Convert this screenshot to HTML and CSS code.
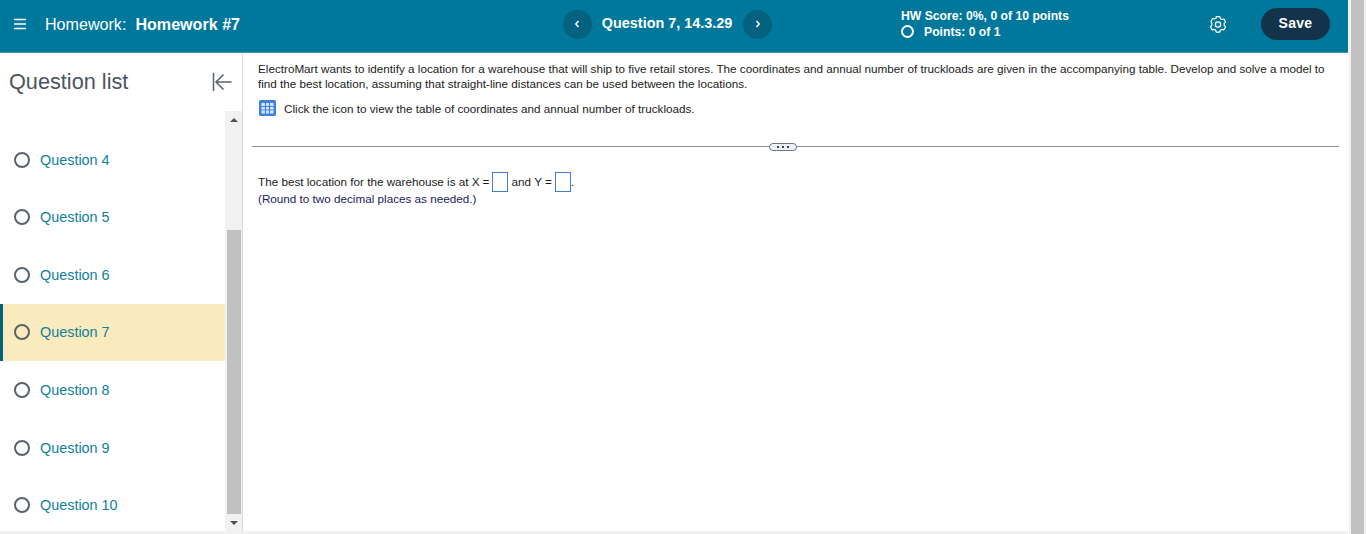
FILE: index.html
```html
<!DOCTYPE html>
<html lang="en">
<head>
<meta charset="utf-8">
<title>Homework #7</title>
<link rel="stylesheet" href="styles.css">
</head>
<body>
<div class="page">
  <div class="app">
    <header class="header">
      <div class="hd-left">
        <svg class="menu" width="14" height="12" viewBox="0 0 14 12"><path d="M1 1.500h12M1 6h12M1 10.500h12" stroke="#fff" stroke-width="1.500" fill="none"/></svg>
        <span class="hw-label">Homework:</span>
        <span class="hw-name">Homework #7</span>
      </div>
      <nav class="hd-nav">
        <button class="nav-btn"><svg width="6" height="8" viewBox="0 0 6 8"><path d="M4.500 1L1.800 4l2.700 3" stroke="#fff" stroke-width="1.500" fill="none"/></svg></button>
        <span class="nav-title">Question 7, 14.3.29</span>
        <button class="nav-btn"><svg width="6" height="8" viewBox="0 0 6 8"><path d="M1.500 1l2.700 3-2.700 3" stroke="#fff" stroke-width="1.500" fill="none"/></svg></button>
      </nav>
      <div class="score">
        <div class="score-line">HW Score: 0%, 0 of 10 points</div>
        <div class="score-line points"><span class="ring"></span>Points: 0 of 1</div>
      </div>
      <svg class="gear" width="16" height="17" viewBox="0 0 16 17"><path d="M6.200 1.200h3.600l.6 2 1.500.9 2-.5 1.700 3-1.400 1.500v1.800l1.400 1.500-1.700 3-2-.5-1.500.9-.6 2H6.200l-.6-2-1.500-.9-2 .5-1.700-3 1.400-1.500V7.600L.9 6.100l1.700-3 2 .5 1.500-.9z" fill="none" stroke="#fff" stroke-width="1.200" stroke-linejoin="round" transform="translate(0 -.6)"/><circle cx="8" cy="8.500" r="2.600" fill="none" stroke="#fff" stroke-width="1.300"/></svg>
      <button class="save">Save</button>
    </header>
    <div class="main">
      <aside class="sidebar">
        <div class="side-head">
          <h2 class="side-title">Question list</h2>
          <svg class="collapse" width="20" height="18" viewBox="0 0 20 18"><path d="M1.500 0v18M19.500 9H4M11.500 1.500L4 9l7.500 7.500" fill="none" stroke="#59636e" stroke-width="1.500"/></svg>
        </div>
        <div class="side-body">
          <ul class="qlist">
            <li class="q"><span class="q-ring"></span><span class="q-text">Question 4</span></li>
            <li class="q"><span class="q-ring"></span><span class="q-text">Question 5</span></li>
            <li class="q"><span class="q-ring"></span><span class="q-text">Question 6</span></li>
            <li class="q current"><span class="q-ring"></span><span class="q-text">Question 7</span></li>
            <li class="q"><span class="q-ring"></span><span class="q-text">Question 8</span></li>
            <li class="q"><span class="q-ring"></span><span class="q-text">Question 9</span></li>
            <li class="q"><span class="q-ring"></span><span class="q-text">Question 10</span></li>
          </ul>
          <div class="rail">
            <div class="arrow up"></div>
            <div class="rail-track"><div class="rail-thumb"></div></div>
            <div class="arrow down"></div>
          </div>
        </div>
      </aside>
      <section class="content">
        <p class="stem">ElectroMart wants to identify a location for a warehouse that will ship to five retail stores. The coordinates and annual number of truckloads are given in the accompanying table. Develop and solve a model to find the best location, assuming that straight-line distances can be used between the locations.</p>
        <div class="table-link">
          <svg width="17" height="16" viewBox="0 0 17 16"><rect width="17" height="16" rx="1.500" fill="#3d82e0"/><path d="M2.500 3h12v10.500h-12z" fill="#dbe8fb"/><path d="M6.500 3v10.500M10.500 3v10.500M2.500 6.500h12M2.500 10h12" stroke="#3d82e0" stroke-width="1.200"/></svg>
          <span>Click the icon to view the table of coordinates and annual number of truckloads.</span>
        </div>
        <div class="divider"><span class="grip"><i></i><i></i><i></i></span></div>
        <p class="answer">The best location for the warehouse is at X<span class="eq">=</span><span class="box"></span> and Y<span class="eq">=</span><span class="box"></span>.</p>
        <p class="hint">(Round to two decimal places as needed.)</p>
      </section>
    </div>
    <div class="hscroll"></div>
  </div>
  <div class="vscroll"><div class="vthumb"></div></div>
</div>
</body>
</html>
```
FILE: styles.css
```css
* { box-sizing: border-box; }
html, body { margin: 0; padding: 0; height: 100%; overflow: hidden; background: #fff; }
body { font-family: "Liberation Sans", Arial, sans-serif; color: #1b1b1b; }
.page { display: flex; width: 1366px; height: 534px; }
.app { width: 1349px; padding-right: 1px; display: flex; flex-direction: column; }
.vscroll { width: 17px; background: #f1f1f1; padding: 0 2px; }
.vthumb { height: 100%; background: #c1c1c1; }
.hscroll { height: 3px; background: #f1f1f1; flex: none; }

.header { flex: none; height: 53px; padding-bottom: 4px; background: #00789c; color: #fff; display: flex; align-items: center; border-bottom: 1px solid #3a92ab; }
.hd-left { width: 563px; display: flex; align-items: center; padding-left: 13px; font-size: 16.100px; }
.menu { margin-right: 18px; }
.hw-label { margin-right: 9px; }
.hw-name { font-weight: bold; }
.hd-nav { width: 209px; display: flex; align-items: center; }
.nav-btn { width: 29px; height: 29px; border: 0; padding: 0; border-radius: 50%; background: #04617f; display: flex; align-items: center; justify-content: center; }
.nav-title { width: 152px; padding-left: 10px; font-size: 14.400px; font-weight: bold; white-space: nowrap; padding-bottom: 2px; }
.score { margin-left: 129px; width: 308px; font-size: 12.200px; font-weight: bold; line-height: 16px; padding-bottom: 1px; }
.points { display: flex; align-items: center; }
.ring { width: 13px; height: 13px; border: 2px solid #fff; border-radius: 50%; margin-right: 10px; }
.gear { flex: none; margin-left: 1px; }
.save { margin-left: 35px; width: 69px; height: 32px; border: 0; border-radius: 16px; background: #12334a; color: #fff; font: bold 14px "Liberation Sans", Arial, sans-serif; letter-spacing: .3px; padding: 0 0 2px; }

.main { flex: 1; display: flex; min-height: 0; }
.sidebar { width: 243px; border-right: 1px solid #d5dbe6; display: flex; flex-direction: column; flex: none; }
.side-head { height: 58px; flex: none; display: flex; align-items: center; justify-content: space-between; padding: 0 10px 1px 9px; }
.side-title { margin: 0; font-size: 21.700px; font-weight: normal; color: #4a5560; }
.side-body { flex: 1; display: flex; min-height: 0; }
.qlist { list-style: none; margin: 0; padding: 19.800px 0 0; flex: 1; }
.q { height: 57.600px; display: flex; align-items: center; padding-left: 14px; font-size: 14.400px; color: #0f7f9e; }
.q.current { background: #f9ebbd; box-shadow: inset 3px 0 0 #02657c; }
.q-ring { width: 16px; height: 16px; border: 2px solid #59636e; border-radius: 50%; margin-right: 10px; flex: none; }
.rail { width: 17px; flex: none; background: #f1f1f1; display: flex; flex-direction: column; padding: 0 1px 0 2px; }
.arrow { height: 17px; flex: none; display: flex; align-items: center; justify-content: center; }
.arrow::before { content: ""; border-left: 4px solid transparent; border-right: 4px solid transparent; }
.arrow.up::before { border-bottom: 4px solid #505050; }
.arrow.down::before { border-top: 4px solid #505050; }
.rail-track { flex: 1; padding-top: 102px; }
.rail-thumb { height: 100%; background: #c1c1c1; }

.content { flex: 1; min-width: 0; padding: 8px 9px 0 9px; font-size: 11.700px; line-height: 15px; color: #1b1b1b; }
.stem { margin: 0 6px; }
.table-link { margin: 9px 6px 0 7px; height: 16px; display: flex; align-items: center; gap: 8px; }
.divider { margin-top: 30px; height: 1px; background: #8a949e; display: flex; justify-content: center; align-items: center; padding-right: 26px; }
.grip { width: 28px; height: 8px; flex: none; border: 1px solid #6b7883; border-radius: 4px; background: #eef2f6; display: flex; align-items: center; justify-content: center; gap: 3px; }
.grip i { width: 2px; height: 2px; background: #39434d; }
.answer { margin: 25px 6px 0; line-height: 20px; height: 20px; display: flex; align-items: center; white-space: pre; }
.eq { margin-left: 3px; }
.box { width: 16px; height: 20px; border: 1px solid #3f7fd9; margin-left: 3px; }
.hint { margin: -1px 6px 0; color: #1b1b60; line-height: 15px; }
```
